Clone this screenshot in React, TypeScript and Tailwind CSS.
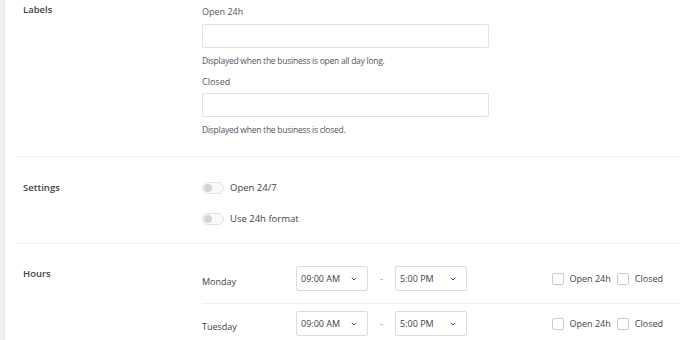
import { ChevronDown } from 'lucide-react';

const font = { fontFamily: '"Open Sans", "Noto Sans", sans-serif' };

function Toggle({ label }: { label: string }) {
  return (
    <div className="flex items-center h-[12px]">
      <div className="w-[22px] h-[12px] rounded-full border border-[#e2e2e4] bg-[#fafafa] flex items-center px-[1px]">
        <div className="w-[8px] h-[8px] rounded-full bg-[#d4d4d6]" />
      </div>
      <span className="ml-[6px] text-[9.5px] leading-[12px] text-[#3c434a]">{label}</span>
    </div>
  );
}

function TimeSelect({ value }: { value: string }) {
  return (
    <div className="w-[72px] h-[25px] border border-[#dcdcde] rounded-[2px] bg-white flex items-center justify-between pl-[4px] pr-[9px]">
      <span className="text-[9px] text-[#3c434a]">{value}</span>
      <ChevronDown className="w-[8px] h-[8px] text-[#50575e]" strokeWidth={3} />
    </div>
  );
}

function Check({ label }: { label: string }) {
  return (
    <div className="flex items-center">
      <div className="w-[12px] h-[12px] border border-[#c9c9cc] rounded-[2px] bg-white" />
      <span className="ml-[6px] text-[9px] text-[#3c434a]">{label}</span>
    </div>
  );
}

function DayRow({ day }: { day: string }) {
  return (
    <div className="flex items-center h-[25px]">
      <span className="w-[94px] text-[9px] text-[#3c434a] pt-[6px]">{day}</span>
      <TimeSelect value="09:00 AM" />
      <span className="w-[27px] text-center text-[9px] text-[#8c8f94]">-</span>
      <TimeSelect value="5:00 PM" />
      <div className="ml-auto flex items-center gap-[6px] pr-[17px]">
        <Check label="Open 24h" />
        <Check label="Closed" />
      </div>
    </div>
  );
}

export default function App() {
  return (
    <div className="w-[680px] h-[340px] bg-white flex overflow-hidden" style={font}>
      <div className="w-[5px] h-full bg-[#f0f0f1] border-r border-[#e6e6e8] shrink-0" />
      <div className="flex-1 pl-[12px]">
        {/* Labels */}
        <div className="flex border-b border-[#f0f0f1] h-[157px]">
          <div className="w-[185px] pl-[6px] pt-[4px] text-[9.5px] leading-[12px] font-semibold text-[#3c434a]">Labels</div>
          <div className="pt-[6px] flex flex-col">
            <span className="text-[9px] leading-[12px] text-[#50575e]">Open 24h</span>
            <div className="mt-[6px] w-[287px] h-[24px] border border-[#e2e2e4] rounded-[2px]" />
            <span className="mt-[7px] text-[8.5px] tracking-[-0.25px] leading-[12px] text-[#50575e]">Displayed when the business is open all day long.</span>
            <span className="mt-[9px] text-[9px] leading-[12px] text-[#50575e]">Closed</span>
            <div className="mt-[5px] w-[287px] h-[24px] border border-[#e2e2e4] rounded-[2px]" />
            <span className="mt-[7px] text-[8.5px] tracking-[-0.25px] leading-[12px] text-[#50575e]">Displayed when the business is closed.</span>
          </div>
        </div>
        {/* Settings */}
        <div className="flex border-b border-[#f0f0f1] h-[87px]">
          <div className="w-[185px] pl-[6px] pt-[25px] text-[9.5px] leading-[12px] font-semibold text-[#3c434a]">Settings</div>
          <div className="pt-[25px] flex flex-col gap-[19px]">
            <Toggle label="Open 24/7" />
            <Toggle label="Use 24h format" />
          </div>
        </div>
        {/* Hours */}
        <div className="flex">
          <div className="w-[185px] pl-[6px] pt-[24px] text-[9.5px] leading-[12px] font-semibold text-[#3c434a] shrink-0">Hours</div>
          <div className="flex-1 pt-[22px]">
            <div className="pb-[12px] border-b border-[#f0f0f1]">
              <DayRow day="Monday" />
            </div>
            <div className="pt-[7px]">
              <DayRow day="Tuesday" />
            </div>
          </div>
        </div>
      </div>
    </div>
  );
}
